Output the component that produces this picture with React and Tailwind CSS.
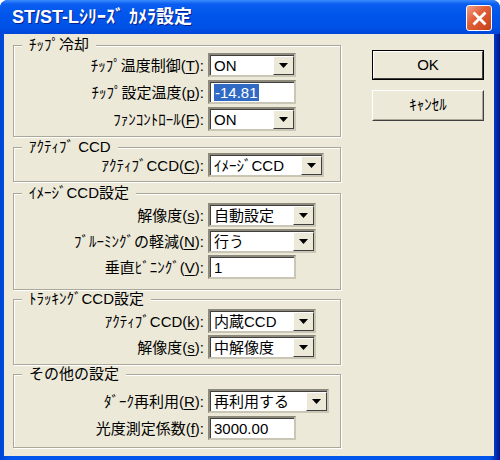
import React from "react";

// Windows XP style "camera settings" dialog, scaled 1.25x

const font = "font-['Liberation_Sans','Noto_Sans_CJK_JP',sans-serif]";

const Key = ({ children }) => <span className="underline underline-offset-[2px]">{children}</span>;

const Arrow = () => (
    <div className="w-[21px] h-full shrink-0 bg-[#ece9d8] border border-t-white border-l-white border-r-[#404040] border-b-[#404040] flex items-center justify-center">
        <svg width="9" height="5" viewBox="0 0 9 5">
            <path d="M0 0h9L4.5 5z" fill="#000" />
        </svg>
    </div>
);

const Sunken = ({ className, children }) => (
    <div className={`h-[24px] shrink-0 border-[2px] border-t-[#8d8a7c] border-l-[#8d8a7c] border-r-[#c9c6b6] border-b-[#c9c6b6] ${className}`}>
        <div className="h-full flex items-center bg-white border-t border-l border-[#404040]">{children}</div>
    </div>
);

const Combo = ({ value, className }) => (
    <Sunken className={className}>
        <span className="flex-1 pl-[3px] leading-none whitespace-nowrap">{value}</span>
        <Arrow />
    </Sunken>
);

const Text = ({ value, selected, className }) => (
    <Sunken className={className}>
        <span className="pl-[3px] leading-none">
            {selected ? <span className="bg-[#316ac5] text-white px-[1px]">{value}</span> : value}
        </span>
    </Sunken>
);

const Row = ({ label, children }) => (
    <div className="flex items-center">
        <div className="w-[190px] text-right whitespace-nowrap leading-none">{label}</div>
        <div className="ml-[4px]">{children}</div>
    </div>
);

const Group = ({ title, className, children }) => (
    <fieldset className={`border border-[#aca899] shadow-[inset_1px_1px_0_#fff,1px_1px_0_#fff] ${className}`}>
        <legend className="ml-[8px] px-[7px] h-[16px] leading-[16px] bg-[#ece9d8] whitespace-nowrap">{title}</legend>
        {children}
    </fieldset>
);

export default function App() {
    return (
        <div className={`w-[500px] h-[460px] bg-white overflow-hidden text-[15px] text-black ${font}`}>
            <div className="w-[500px] h-[460px] flex flex-col rounded-t-[8px] overflow-hidden bg-[#0047d9]">
                {/* Title bar */}
                <div className="h-[34px] shrink-0 flex items-center pl-[12px] pr-[8px] bg-[linear-gradient(to_bottom,#3a8cff_0%,#0a5df0_12%,#0055ea_45%,#0052e6_80%,#0045d8_100%)]">
                    <span className="text-white font-bold text-[18px] leading-none whitespace-nowrap [text-shadow:1px_1px_0_#0a1e8c]">
                        ST/ST-Lｼﾘｰｽﾞ ｶﾒﾗ設定
                    </span>
                    <button className="ml-auto mt-[2px] w-[26px] h-[26px] rounded-[3px] border border-white bg-[linear-gradient(135deg,#f0a08a_0%,#e2613a_40%,#c6401a_100%)] flex items-center justify-center">
                        <svg width="15" height="15" viewBox="0 0 15 15">
                            <path d="M2.5 2.5l10 10M12.5 2.5l-10 10" stroke="#fff" strokeWidth="2.8" strokeLinecap="square" />
                        </svg>
                    </button>
                </div>

                {/* Body */}
                <div className="flex-1 flex pl-[4px] pr-[6px] pb-[4px] bg-[linear-gradient(to_right,#0046d5,#0055ea_2%,#0055ea_98%,#00138c)]">
                    <div className="flex-1 flex bg-[#ece9d8] pl-[9px] pt-[3px]">
                        {/* Group boxes */}
                        <div className="w-[328px] flex flex-col">
                            <Group title="ﾁｯﾌﾟ冷却" className="pb-[5px]">
                                <div className="flex flex-col gap-[3px]">
                                    <Row label={<>ﾁｯﾌﾟ温度制御(<Key>T</Key>):</>}>
                                        <Combo value="ON" className="w-[88px]" />
                                    </Row>
                                    <Row label={<>ﾁｯﾌﾟ設定温度(<Key>p</Key>):</>}>
                                        <Text value="-14.81" selected className="w-[88px]" />
                                    </Row>
                                    <Row label={<>ﾌｧﾝｺﾝﾄﾛｰﾙ(<Key>F</Key>):</>}>
                                        <Combo value="ON" className="w-[88px]" />
                                    </Row>
                                </div>
                            </Group>

                            <Group title="ｱｸﾃｨﾌﾞ CCD" className="mt-[2px] pb-[4px]">
                                <div className="-mt-[2px]">
                                    <Row label={<>ｱｸﾃｨﾌﾞCCD(<Key>C</Key>):</>}>
                                        <Combo value="ｲﾒｰｼﾞCCD" className="w-[116px]" />
                                    </Row>
                                </div>
                            </Group>

                            <Group title="ｲﾒｰｼﾞCCD設定" className="mt-[3px] pb-[10px]">
                                <div className="flex flex-col gap-[2px] mt-[2px]">
                                    <Row label={<>解像度(<Key>s</Key>):</>}>
                                        <Combo value="自動設定" className="w-[108px]" />
                                    </Row>
                                    <Row label={<>ﾌﾞﾙｰﾐﾝｸﾞの軽減(<Key>N</Key>):</>}>
                                        <Combo value="行う" className="w-[108px]" />
                                    </Row>
                                    <Row label={<>垂直ﾋﾞﾆﾝｸﾞ(<Key>V</Key>):</>}>
                                        <Text value="1" className="w-[88px]" />
                                    </Row>
                                </div>
                            </Group>

                            <Group title="ﾄﾗｯｷﾝｸﾞCCD設定" className="mt-[1px] pb-[5px]">
                                <div className="flex flex-col gap-[2px] mt-[2px]">
                                    <Row label={<>ｱｸﾃｨﾌﾞCCD(<Key>k</Key>):</>}>
                                        <Combo value="内蔵CCD" className="w-[108px]" />
                                    </Row>
                                    <Row label={<>解像度(<Key>s</Key>):</>}>
                                        <Combo value="中解像度" className="w-[108px]" />
                                    </Row>
                                </div>
                            </Group>

                            <Group title="その他の設定" className="mt-[1px] pb-[7px]">
                                <div className="flex flex-col gap-[3px] mt-[7px]">
                                    <Row label={<>ﾀﾞｰｸ再利用(<Key>R</Key>):</>}>
                                        <Combo value="再利用する" className="w-[121px]" />
                                    </Row>
                                    <Row label={<>光度測定係数(<Key>f</Key>):</>}>
                                        <Text value="3000.00" className="w-[88px]" />
                                    </Row>
                                </div>
                            </Group>
                        </div>

                        {/* Buttons */}
                        <div className="ml-[31px] pt-[13px] flex flex-col gap-[10px]">
                            <button className="w-[112px] h-[30px] border border-black">
                                <div className="h-full flex items-center justify-center border border-t-white border-l-white border-r-[#404040] border-b-[#404040]">
                                    OK
                                </div>
                            </button>
                            <button className="w-[112px] h-[31px] border border-t-white border-l-white border-r-[#404040] border-b-[#404040]">
                                <div className="h-full flex items-center justify-center border border-t-transparent border-l-transparent border-r-[#aca899] border-b-[#aca899]">
                                    ｷｬﾝｾﾙ
                                </div>
                            </button>
                        </div>
                    </div>
                </div>
            </div>
        </div>
    );
}
